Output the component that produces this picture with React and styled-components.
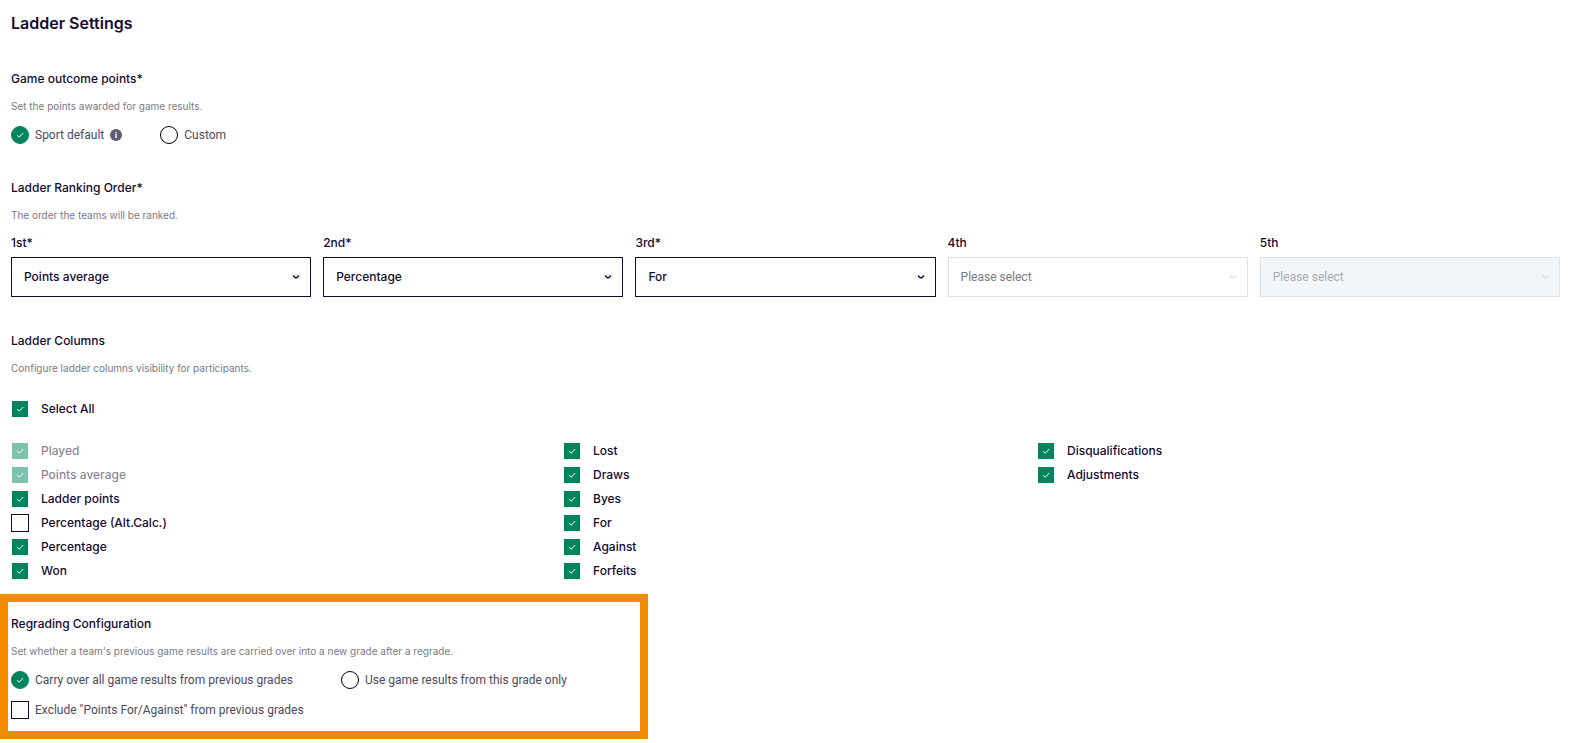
import React, { useState } from 'react'
import styled, { createGlobalStyle } from 'styled-components'

const colors = {
  ink: '#150a32',
  text: '#4d4a5c',
  muted: '#7b7987',
  green: '#00845c',
  orange: '#f28b00',
  line: '#e0e1e6',
  disabled: '#f2f6fa'
}

const GlobalStyle = createGlobalStyle`
  *, *::before, *::after {
    box-sizing: border-box;
  }
  body {
    margin: 0;
    background: #fff;
    color: ${colors.ink};
    font-family: Inter, 'Liberation Sans', sans-serif;
    font-size: 12px;
    line-height: 16px;
  }
  input, select {
    margin: 0;
    font: inherit;
    color: inherit;
  }
`

const Page = styled.main`
  padding: 11px 0 4px;
`

const Title = styled.h1`
  margin: 0;
  padding: 0 11px;
  font-size: 16px;
  font-weight: 600;
  line-height: 24px;
`

const Section = styled.section`
  margin-top: 36px;
  padding: 0 30px 0 11px;
`

const Highlighted = styled.section`
  max-width: 648px;
  margin-top: 11px;
  padding: 14px 3px 12px;
  border: 8px solid ${colors.orange};
`

const Heading = styled.h2`
  margin: 0;
  font-size: 12px;
  font-weight: 500;
  line-height: 16px;
`

const Description = styled.p`
  margin: 11px 0 12px;
  color: ${colors.muted};
  font-size: 10px;
`

const RadioGroup = styled.div`
  display: flex;
  flex-wrap: wrap;
  gap: 12px ${p => (p.$wide ? '48px' : '38px')};
`

const Option = styled.label`
  display: flex;
  align-items: center;
  gap: 6px;
  color: ${colors.text};
  font-family: Roboto, 'Liberation Sans', sans-serif;
`

const ExcludeOption = styled(Option)`
  margin-top: 12px;
`

const ColumnOption = styled.label`
  display: flex;
  align-items: center;
  gap: 12px;
  height: 24px;
  font-weight: 500;
  opacity: ${p => (p.$disabled ? 0.5 : 1)};
`

const Control = styled.span`
  display: grid;
  flex: none;
  place-items: center;
  width: 18px;
  height: 18px;

  > * {
    grid-area: 1 / 1;
  }
`

const Input = styled.input`
  appearance: none;
  width: 18px;
  height: 18px;
  border: 1px solid ${colors.ink};
  background: #fff;
`

const Radio = styled(Input)`
  border-color: #000;
  border-radius: 50%;
  &:checked {
    border-color: ${colors.green};
    background: ${colors.green};
  }
`

const Checkbox = styled(Input)`
  &:checked {
    border-color: transparent;
    background: ${colors.green};
    background-clip: padding-box;
  }
`

const Tick = styled.svg`
  width: 8px;
  height: 8px;
  fill: none;
  stroke: #fff;
  pointer-events: none;
`

const InfoIcon = styled.svg`
  width: 12px;
  height: 12px;
`

const Ranks = styled.div`
  display: grid;
  grid-template-columns: repeat(5, 1fr);
  gap: 12px;
`

const RankLabel = styled.label`
  display: block;
  margin-bottom: 6px;
  font-weight: 500;
`

const SelectWrapper = styled.div`
  position: relative;
  color: ${p => (p.$empty ? colors.line : colors.ink)};
`

const Select = styled.select`
  && {
    display: block;
    appearance: none;
    width: 100%;
    height: 40px;
    padding: 0 30px 0 12px;
    border: 1px solid ${p => (p.$empty ? colors.line : colors.ink)};
    border-radius: 0;
    background: #fff;
    color: ${p => (p.$empty ? colors.muted : colors.ink)};
    font-family: ${p => (p.$empty ? 'Roboto' : 'Inter')}, 'Liberation Sans', sans-serif;
    font-weight: ${p => (p.$empty ? 400 : 500)};
  }
  &&:disabled {
    background: ${colors.disabled};
    color: #a9abb5;
    opacity: 1;
  }
`

const Chevron = styled.svg`
  position: absolute;
  top: 16px;
  right: 11px;
  width: 8px;
  height: 8px;
  fill: none;
  stroke: currentColor;
  stroke-width: 1.4;
  pointer-events: none;
`

const SelectAll = styled.div`
  margin: 21px 0 18px;
`

const Columns = styled.div`
  display: grid;
  grid-template-columns: 552fr 474fr 523fr;
`

const CheckMark = () => (
  <Tick viewBox="0 0 8 8" aria-hidden="true">
    <path d="M1 4.2 3.2 6.2 7.2 2" />
  </Tick>
)

const RadioOption = ({ label, children, checked, ...props }) => (
  <Option>
    <Control>
      <Radio type="radio" checked={checked} {...props} />
      {checked && <CheckMark />}
    </Control>
    {label}
    {children}
  </Option>
)

const Box = ({ checked, ...props }) => (
  <Control>
    <Checkbox type="checkbox" checked={checked} {...props} />
    {checked && <CheckMark />}
  </Control>
)

const ranks = [
  { id: 'rank1', label: '1st*', value: 'Points average' },
  { id: 'rank2', label: '2nd*', value: 'Percentage' },
  { id: 'rank3', label: '3rd*', value: 'For' },
  { id: 'rank4', label: '4th' },
  { id: 'rank5', label: '5th', disabled: true }
]

const columns = [
  ['Played', 'Points average', 'Ladder points', 'Percentage (Alt.Calc.)', 'Percentage', 'Won'],
  ['Lost', 'Draws', 'Byes', 'For', 'Against', 'Forfeits'],
  ['Disqualifications', 'Adjustments']
]

const locked = ['Played', 'Points average']

const App = () => {
  const [order, setOrder] = useState(ranks.map(({ value }) => value || ''))
  const [points, setPoints] = useState('default')
  const [regrade, setRegrade] = useState('carry')
  const [exclude, setExclude] = useState(false)
  const [selectAll, setSelectAll] = useState(true)
  const [hidden, setHidden] = useState(['Percentage (Alt.Calc.)'])

  const changeRank = (index, value) =>
    setOrder(order.map((current, i) => (i === index ? value : current)))

  const toggleColumn = name =>
    setHidden(hidden.includes(name) ? hidden.filter(h => h !== name) : [...hidden, name])

  const toggleAll = () => {
    setHidden(selectAll ? columns.flat().filter(name => !locked.includes(name)) : [])
    setSelectAll(!selectAll)
  }

  return (
    <Page>
      <GlobalStyle />
      <Title>Ladder Settings</Title>

      <Section>
        <Heading>Game outcome points*</Heading>
        <Description>Set the points awarded for game results.</Description>
        <RadioGroup>
          <RadioOption
            name="points"
            label="Sport default"
            checked={points === 'default'}
            onChange={() => setPoints('default')}
          >
            <InfoIcon viewBox="0 0 12 12" aria-hidden="true">
              <circle cx="6" cy="6" r="6" fill="#5f5d70" />
              <path d="M6 3v1.2M6 4.8v4.2" stroke="#fff" strokeWidth="1.4" />
            </InfoIcon>
          </RadioOption>
          <RadioOption
            name="points"
            label="Custom"
            checked={points === 'custom'}
            onChange={() => setPoints('custom')}
          />
        </RadioGroup>
      </Section>

      <Section>
        <Heading>Ladder Ranking Order*</Heading>
        <Description>The order the teams will be ranked.</Description>
        <Ranks>
          {ranks.map(({ id, label, disabled }, index) => (
            <div key={id}>
              <RankLabel htmlFor={id}>{label}</RankLabel>
              <SelectWrapper $empty={!order[index]}>
                <Select
                  id={id}
                  value={order[index]}
                  disabled={disabled}
                  onChange={e => changeRank(index, e.target.value)}
                  $empty={!order[index]}
                >
                  <option value="">Please select</option>
                  <option>Points average</option>
                  <option>Percentage</option>
                  <option>For</option>
                </Select>
                <Chevron viewBox="0 0 8 8" aria-hidden="true">
                  <path d="M1 2.6 3.2 4.8H4.8L7 2.6" />
                </Chevron>
              </SelectWrapper>
            </div>
          ))}
        </Ranks>
      </Section>

      <Section>
        <Heading>Ladder Columns</Heading>
        <Description>Configure ladder columns visibility for participants.</Description>
        <SelectAll>
          <ColumnOption>
            <Box checked={selectAll} onChange={toggleAll} />
            Select All
          </ColumnOption>
        </SelectAll>
        <Columns>
          {columns.map(names => (
            <div key={names[0]}>
              {names.map(name => (
                <ColumnOption key={name} $disabled={locked.includes(name)}>
                  <Box
                    checked={!hidden.includes(name)}
                    disabled={locked.includes(name)}
                    onChange={() => toggleColumn(name)}
                  />
                  {name}
                </ColumnOption>
              ))}
            </div>
          ))}
        </Columns>
      </Section>

      <Highlighted>
        <Heading>Regrading Configuration</Heading>
        <Description>
          Set whether a team's previous game results are carried over into a new grade after a
          regrade.
        </Description>
        <RadioGroup $wide>
          <RadioOption
            name="regrade"
            label="Carry over all game results from previous grades"
            checked={regrade === 'carry'}
            onChange={() => setRegrade('carry')}
          />
          <RadioOption
            name="regrade"
            label="Use game results from this grade only"
            checked={regrade === 'current'}
            onChange={() => setRegrade('current')}
          />
        </RadioGroup>
        <ExcludeOption>
          <Box checked={exclude} onChange={() => setExclude(!exclude)} />
          Exclude "Points For/Against" from previous grades
        </ExcludeOption>
      </Highlighted>
    </Page>
  )
}

export default App
